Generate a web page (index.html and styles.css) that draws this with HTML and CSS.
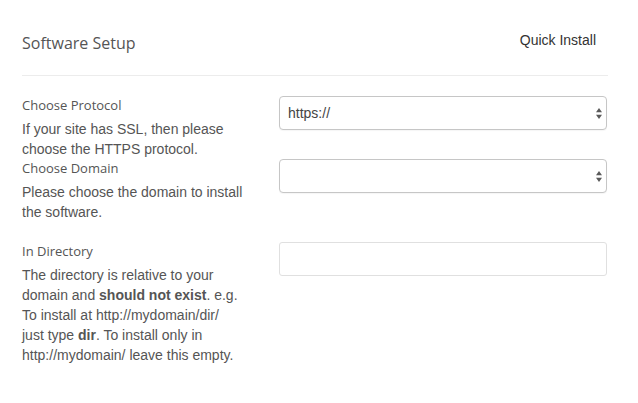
FILE: index.html
```html
<!DOCTYPE html>
<html>
<head>
<meta charset="utf-8">
<link rel="stylesheet" href="styles.css">
</head>
<body>
<div class="panel">
  <div class="header">
    <h2 class="title">Software Setup</h2>
    <span class="quick">Quick Install</span>
  </div>

  <div class="row">
    <div class="left">
      <div class="label">Choose Protocol</div>
      <div class="desc">If your site has SSL, then please choose the HTTPS protocol.</div>
    </div>
    <div class="right">
      <div class="select-wrap">
        <select class="select"><option>https://</option></select>
        <svg class="arrows" width="6" height="11" viewBox="0 0 6 11"><path d="M0 4.2L3 0 6 4.2Z M0 6.8H6L3 11Z" fill="#5a5a5a"/></svg>
      </div>
    </div>
  </div>

  <div class="row">
    <div class="left">
      <div class="label">Choose Domain</div>
      <div class="desc">Please choose the domain to install the software.</div>
    </div>
    <div class="right">
      <div class="select-wrap">
        <select class="select"><option></option></select>
        <svg class="arrows" width="6" height="11" viewBox="0 0 6 11"><path d="M0 4.2L3 0 6 4.2Z M0 6.8H6L3 11Z" fill="#5a5a5a"/></svg>
      </div>
    </div>
  </div>

  <div class="row row-gap">
    <div class="left">
      <div class="label">In Directory</div>
      <div class="desc">The directory is relative to your domain and <b>should not exist</b>. e.g. To install at http://mydomain/dir/ just type <b>dir</b>. To install only in http://mydomain/ leave this empty.</div>
    </div>
    <div class="right">
      <input class="input" type="text">
    </div>
  </div>
</div>
</body>
</html>
```
FILE: styles.css
```css
html, body {
  margin: 0;
  padding: 0;
  background: #fff;
}
.panel {
  padding: 0 30px 0 22px;
}
.header {
  display: flex;
  justify-content: space-between;
  align-items: flex-start;
  padding: 30px 0 21px 0;
  border-bottom: 1px solid #ececec;
}
.title {
  margin: 2px 0 0 0;
  font-family: "Open Sans", sans-serif;
  font-weight: 400;
  font-size: 16px;
  line-height: 22px;
  color: #555;
}
.quick {
  margin-right: 12px;
  font-family: "Liberation Sans", Arial, sans-serif;
  font-size: 14px;
  line-height: 20px;
  color: #333;
}
.row {
  display: flex;
  align-items: flex-start;
}
.header + .row {
  margin-top: 20px;
}
.row-gap {
  margin-top: 20px;
}
.left {
  width: 222px;
  padding-right: 35px;
  flex: none;
}
.right {
  width: 328px;
  flex: none;
}
.label {
  font-family: "Open Sans", sans-serif;
  font-size: 13px;
  line-height: 18px;
  color: #555;
  margin-bottom: 5px;
}
.desc {
  font-family: "Liberation Sans", Arial, sans-serif;
  font-size: 14px;
  line-height: 20px;
  color: #555;
}
.desc b {
  font-weight: 700;
}
.select-wrap {
  position: relative;
}
.select {
  -webkit-appearance: none;
  appearance: none;
  display: block;
  width: 100%;
  height: 34px;
  margin: 0;
  padding: 0 20px 0 8px;
  border: 1px solid #c6c6c6;
  border-radius: 4px;
  background: #fff;
  font-family: "Liberation Sans", Arial, sans-serif;
  font-size: 14px;
  color: #444;
  box-shadow: 0 1px 1px rgba(0,0,0,0.04);
}
.arrows {
  position: absolute;
  right: 5px;
  top: 12px;
}
.input {
  display: block;
  box-sizing: border-box;
  width: 100%;
  height: 34px;
  margin: 0;
  padding: 0 8px;
  border: 1px solid #e0e0e0;
  border-radius: 3px;
  background: #fff;
  font-family: "Liberation Sans", Arial, sans-serif;
  font-size: 14px;
  outline: none;
}
```
